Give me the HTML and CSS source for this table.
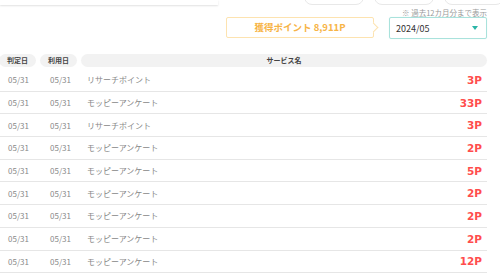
FILE: index.html
```html
<!DOCTYPE html>
<html lang="ja">
  <head>
    <meta charset="UTF-8" />
    <title>ポイント履歴</title>
    <link rel="stylesheet" href="styles.css">
  </head>
  <body>
    <div class="topbar">
      <div class="topbar-panel"></div>
      <div class="tab"></div>
      <div class="tab"></div>
      <div class="tab"></div>
    </div>

    <div class="container">
      <p class="note">※ 過去12カ月分まで表示</p>

      <div class="summary">
        <div class="points-box">獲得ポイント 8,911P</div>
        <div class="month-select">
          <span>2024/05</span>
          <span class="caret"></span>
        </div>
      </div>

      <div class="history">
        <div class="head">
          <div class="pill">判定日</div>
          <div class="pill">利用日</div>
          <div class="pill">サービス名</div>
        </div>
        <div class="row"><span class="date">05/31</span><span class="date">05/31</span><span class="service">リサーチポイント</span><span class="pt">3P</span></div>
        <div class="row"><span class="date">05/31</span><span class="date">05/31</span><span class="service">モッピーアンケート</span><span class="pt">33P</span></div>
        <div class="row"><span class="date">05/31</span><span class="date">05/31</span><span class="service">リサーチポイント</span><span class="pt">3P</span></div>
        <div class="row"><span class="date">05/31</span><span class="date">05/31</span><span class="service">モッピーアンケート</span><span class="pt">2P</span></div>
        <div class="row"><span class="date">05/31</span><span class="date">05/31</span><span class="service">モッピーアンケート</span><span class="pt">5P</span></div>
        <div class="row"><span class="date">05/31</span><span class="date">05/31</span><span class="service">モッピーアンケート</span><span class="pt">2P</span></div>
        <div class="row"><span class="date">05/31</span><span class="date">05/31</span><span class="service">モッピーアンケート</span><span class="pt">2P</span></div>
        <div class="row"><span class="date">05/31</span><span class="date">05/31</span><span class="service">モッピーアンケート</span><span class="pt">2P</span></div>
        <div class="row"><span class="date">05/31</span><span class="date">05/31</span><span class="service">モッピーアンケート</span><span class="pt">12P</span></div>
      </div>
    </div>
  </body>
</html>
```

FILE: styles.css
```css
body {
  margin: 0;
  background: #fff;
  font-family: "Noto Sans CJK JP", "Noto Sans", sans-serif;
  color: #555;
  overflow: hidden;
}

/* header remnants at the very top */
.topbar {
  display: flex;
  align-items: flex-start;
  height: 6px;
}
.topbar-panel {
  flex: none;
  width: 218px;
  height: 5px;
  background: #fff;
  box-shadow: 0 1px 2px rgba(0, 0, 0, 0.12);
}
.tab {
  flex: none;
  width: 58px;
  height: 20px;
  margin-top: -17px;
  margin-left: 10px;
  border: 1px solid #e8e8e8;
  border-radius: 8px;
  background: #fff;
}
.tab:nth-child(2) {
  margin-left: 86px;
}

.container {
  padding-right: 13px;
}

.note {
  margin: 1px 0 0;
  text-align: right;
  font-size: 7.5px;
  line-height: 12px;
  color: #999;
}

.summary {
  display: flex;
  justify-content: flex-end;
  gap: 15px;
  margin-top: -2px;
}
.points-box {
  position: relative;
  width: 148px;
  height: 21px;
  box-sizing: border-box;
  border: 1px solid #fde3b0;
  border-radius: 2px;
  text-align: center;
  font-size: 9.5px;
  font-weight: bold;
  line-height: 19px;
  color: #f7b446;
}
/* small chevron on the right edge */
.points-box::after {
  content: "";
  position: absolute;
  right: -4px;
  top: 6px;
  width: 6px;
  height: 6px;
  background: #fff;
  border-top: 1px solid #fde3b0;
  border-right: 1px solid #fde3b0;
  transform: rotate(45deg);
}
.month-select {
  display: flex;
  align-items: center;
  justify-content: space-between;
  width: 98px;
  height: 22px;
  box-sizing: border-box;
  padding: 0 8px 0 6px;
  border: 1px solid #a9e2dc;
  border-radius: 2px;
  box-shadow: 0 0 1px #c9efeb;
  font-size: 9px;
  color: #333;
}
.caret {
  width: 0;
  height: 0;
  border-left: 3.5px solid transparent;
  border-right: 3.5px solid transparent;
  border-top: 4px solid #2bb5a7;
}

.history {
  margin-top: 15px;
}
.head {
  display: flex;
  gap: 4px;
}
.pill {
  height: 13px;
  border-radius: 7px;
  background: #f2f2f2;
  font-size: 7px;
  font-weight: bold;
  line-height: 13px;
  text-align: center;
  color: #444;
  flex: none;
  width: 37px;
}
.pill:first-child {
  margin-left: -1px;
}
.pill:last-child {
  flex: 1;
}

.row {
  display: flex;
  align-items: center;
  height: 21.7px;
  border-bottom: 1px solid #e6e6e6;
  font-size: 8px;
  color: #888;
}
.head + .row {
  margin-top: 2px;
}
.date {
  width: 42px;
  padding-left: 8px;
  box-sizing: border-box;
}
.date + .date {
  width: 45px;
}
.service {
  flex: 1;
}
.pt {
  padding-right: 5px;
  font-family: "DejaVu Sans", sans-serif;
  font-size: 10.5px;
  font-weight: bold;
  color: #ff4d4d;
}
```
